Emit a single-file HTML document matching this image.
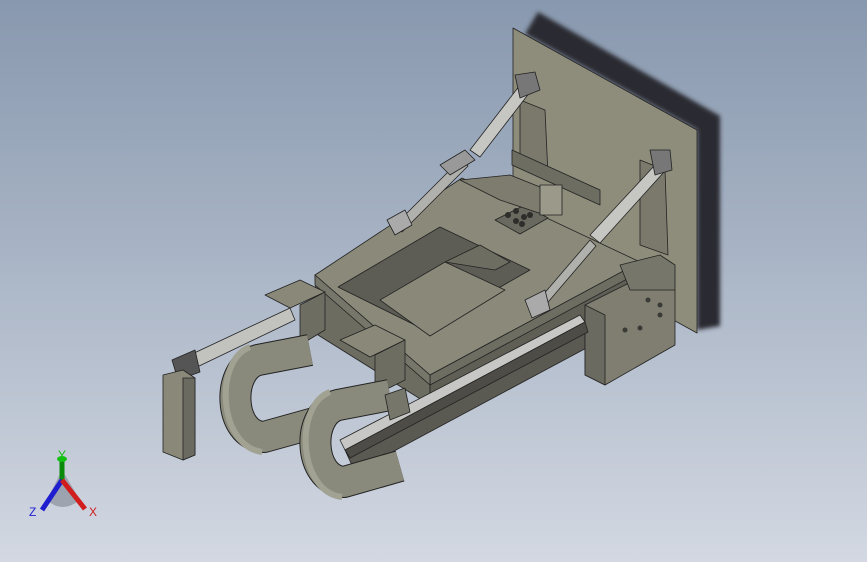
<!DOCTYPE html>
<html><head><style>
html,body{margin:0;padding:0;width:867px;height:562px;overflow:hidden}
body{background:linear-gradient(180deg,#8898ae 0%,#a8b4c5 45%,#d3d8e2 100%)}
svg{position:absolute;left:0;top:0}
</style></head><body>
<svg width="867" height="562" viewBox="0 0 867 562" xmlns="http://www.w3.org/2000/svg" stroke="#222" stroke-width="0.8" stroke-linejoin="round">
<defs><filter id="b"><feGaussianBlur stdDeviation="2"/></filter></defs>
<polygon points="538,12 720,116 720,326 697,330 697,130 525,34" fill="#2a2c30" stroke="none" filter="url(#b)"/>
<polygon points="513,28 697,130 697,333 513,232" fill="#8e8d7c"/>
<polygon points="520,100 545,110 548,175 520,165" fill="#7a796c"/>
<polygon points="640,160 665,170 668,255 640,245" fill="#7a796c"/>
<polygon points="512,150 600,190 600,205 512,165" fill="#6e6d62"/>
<polygon points="345,450 585,325 592,345 355,472" fill="#5a5952"/>
<polygon points="315,275 430,345 430,405 318,335" fill="#6d6c61"/>
<polygon points="430,350 640,262 640,300 430,405" fill="#605f56"/>
<polygon points="315,275 462,178 640,262 430,375" fill="#8b8a7a"/>
<polygon points="430,375 640,262 640,272 430,385" fill="#6e6d62"/>
<polygon points="315,275 430,375 430,385 315,285" fill="#77766a"/>
<polygon points="338,287 440,227 530,270 425,330" fill="#5e5d55"/>
<polygon points="380,300 445,262 505,290 430,336" fill="#8a8979"/>
<polygon points="445,262 480,245 510,262 495,270" fill="#6e6d62"/>
<polygon points="495,220 525,205 548,218 520,234" fill="#6a695f"/>
<g fill="#2d2d2a" stroke="none">
<circle cx="508" cy="215" r="3"/><circle cx="516" cy="211" r="3"/><circle cx="524" cy="217" r="3"/><circle cx="516" cy="221" r="3"/><circle cx="530" cy="215" r="3"/><circle cx="522" cy="224" r="3"/>
</g>
<polygon points="460,180 510,175 560,195 545,215 500,200" fill="#7d7c6e"/>
<rect x="540" y="185" width="22" height="30" fill="#9a998a"/>
<polygon points="585,305 635,280 675,290 675,345 605,385 585,375" fill="#7f7e70"/>
<polygon points="585,305 605,315 605,385 585,375" fill="#6b6a60"/>
<polygon points="620,265 660,255 675,265 675,290 630,290" fill="#77766a"/>
<g fill="#3a3a36" stroke="none"><circle cx="648" cy="300" r="2.5"/><circle cx="660" cy="305" r="2.5"/><circle cx="625" cy="330" r="2.5"/><circle cx="640" cy="328" r="2.5"/><circle cx="660" cy="315" r="2.5"/></g>
<polygon points="190,355 290,308 295,320 195,368" fill="#c2c3bf"/>
<polygon points="172,360 195,350 200,372 178,380" fill="#555"/>
<polygon points="265,295 300,280 325,292 290,308" fill="#8a8979"/>
<polygon points="300,305 325,292 325,330 300,345" fill="#6e6d62"/>
<path d="M310,350 L258,360 C226,368 228,436 264,437 L318,422" fill="none" stroke="#222" stroke-width="32"/>
<path d="M310,350 L258,360 C226,368 228,436 264,437 L318,422" fill="none" stroke="#8a8a7c" stroke-width="30"/>
<path d="M250,347 C214,360 218,446 262,452" fill="none" stroke="#a2a293" stroke-width="6"/>
<polygon points="340,340 375,325 405,340 370,357" fill="#8a8979"/>
<polygon points="375,355 405,340 405,380 375,395" fill="#6e6d62"/>
<path d="M390,395 L338,405 C306,413 308,480 344,482 L400,466" fill="none" stroke="#222" stroke-width="32"/>
<path d="M390,395 L338,405 C306,413 308,480 344,482 L400,466" fill="none" stroke="#8a8a7c" stroke-width="30"/>
<path d="M330,392 C294,405 298,492 342,497" fill="none" stroke="#a2a293" stroke-width="6"/>
<polygon points="340,440 580,315 585,322 345,450" fill="#c7c8c5"/>
<polygon points="345,450 585,322 588,332 350,458" fill="#4d4c46"/>
<polygon points="385,395 405,388 410,412 390,420" fill="#77766a"/>
<polygon points="163,375 183,370 195,378 195,455 183,460 163,452" fill="#8a8979"/>
<polygon points="183,378 195,378 195,455 183,460" fill="#6b6a60"/>
<polygon points="470,150 520,85 530,92 480,157" fill="#c6c7c3"/>
<polygon points="395,225 460,160 468,166 402,232" fill="#b0b1ad"/>
<polygon points="440,165 465,150 475,160 450,175" fill="#999"/>
<polygon points="387,220 405,210 412,225 395,235" fill="#aaa"/>
<polygon points="515,75 535,72 540,90 520,98" fill="#777"/>
<polygon points="590,235 655,165 664,172 600,243" fill="#c6c7c3"/>
<polygon points="530,310 590,240 596,246 537,315" fill="#b0b1ad"/>
<polygon points="525,300 545,290 550,310 532,318" fill="#aaa"/>
<polygon points="650,150 670,150 672,170 655,175" fill="#777"/>
<g stroke="none">
<path d="M62,470 L47,500 Q62,514 80,500 Z" fill="#7f8592" opacity="0.6"/>
<rect x="59.5" y="460" width="5" height="22" fill="#0a8a0a"/>
<ellipse cx="62" cy="459" rx="5" ry="3" fill="#12c012"/>
<line x1="62" y1="480" x2="42" y2="510" stroke="#1e1ed0" stroke-width="5"/>
<line x1="62" y1="480" x2="85" y2="509" stroke="#d01e1e" stroke-width="5"/>
</g>
<g font-family="Liberation Sans, sans-serif" font-size="12" stroke="none">
<text x="58" y="459" fill="#12c012">Y</text>
<text x="29" y="516" fill="#1e1ed0">Z</text>
<text x="89" y="516" fill="#d01e1e">X</text>
</g>
</svg>
</body></html>
